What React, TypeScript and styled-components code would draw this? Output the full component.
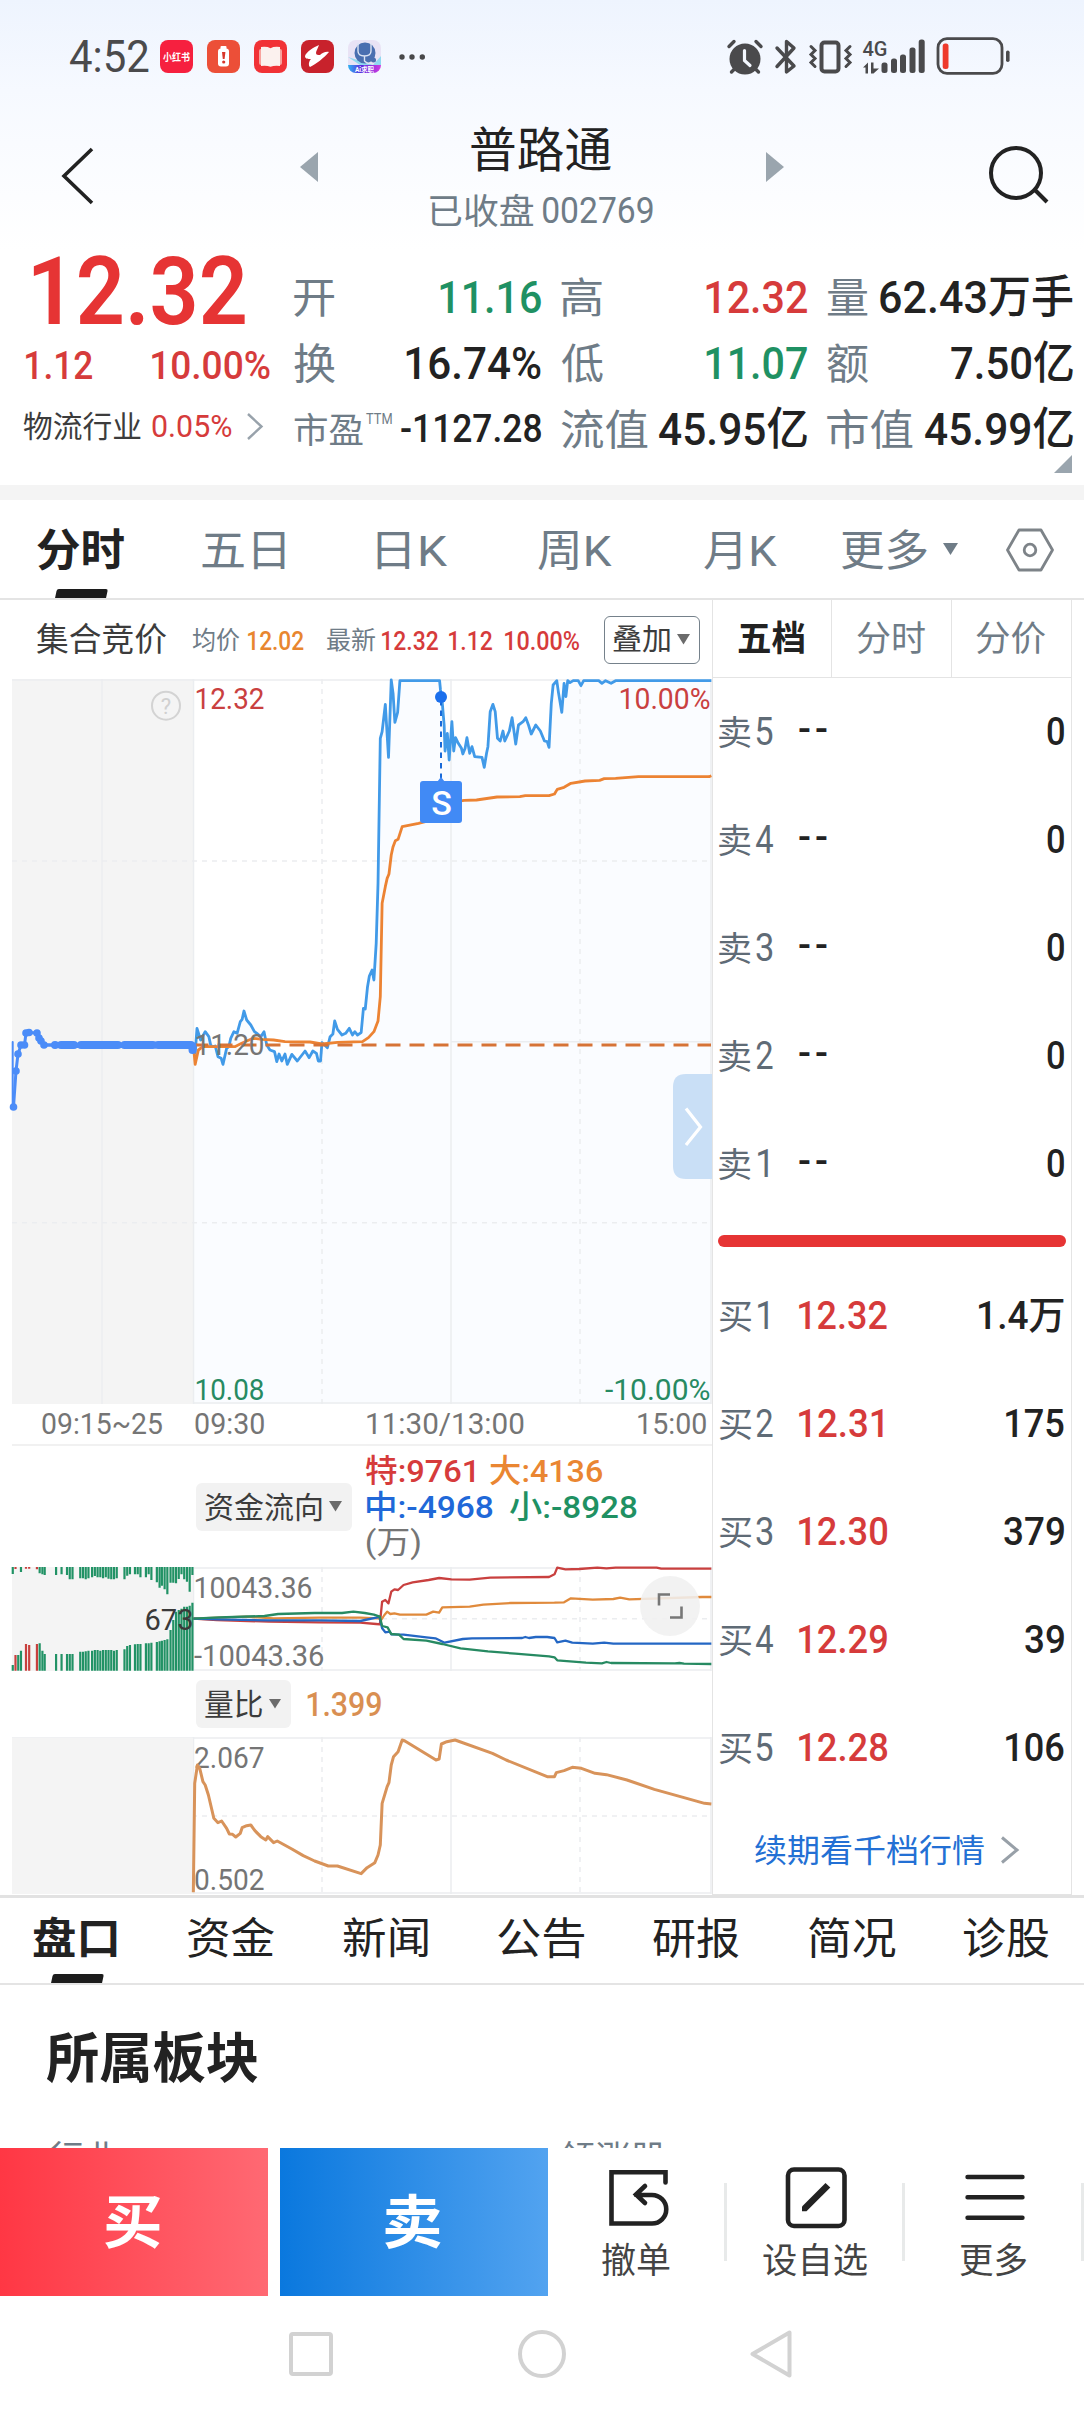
import React, { useLayoutEffect, useState } from "react";
import styled, { createGlobalStyle } from "styled-components";

const FONT = `Roboto, "Noto Sans CJK SC", "Noto Sans", sans-serif`;

const INK = "#222222";
const MUTED = "#6f7c87";
const RED = "#d63b3b";
const GREEN = "#1f9163";
const LINE = "#e4e4e4";

const Global = createGlobalStyle`
  * { box-sizing: border-box; }
  body { margin: 0; background: #fff; }
`;

/* ---------- text fitted to a fixed ink width ---------- */

const FitBox = styled.span<{ $w: number; $h: number; $ml: number }>`
  display: block;
  flex: none;
  width: ${(p) => p.$w}px;
  height: ${(p) => p.$h}px;
  margin-left: ${(p) => p.$ml}px;
`;

const FitInner = styled.span<{ $size: number; $weight: number; $color: string; $spacing: number }>`
  display: block;
  width: max-content;
  white-space: nowrap;
  transform-origin: 0 50%;
  font-family: ${FONT};
  font-size: ${(p) => p.$size}px;
  line-height: ${(p) => p.$size}px;
  font-weight: ${(p) => p.$weight};
  letter-spacing: ${(p) => p.$spacing}px;
  color: ${(p) => p.$color};
`;

type FitProps = {
  w: number;
  size: number;
  weight?: number;
  color?: string;
  ml?: number;
  spacing?: number;
  lift?: number;
  children: string;
};

function Fit({ w, size, weight = 400, color = INK, ml = 0, spacing = 0, lift = 0, children }: FitProps) {
  const [transform, setTransform] = useState("none");
  useLayoutEffect(() => {
    const ctx = document.createElement("canvas").getContext("2d")!;
    ctx.font = `${weight} ${size}px ${FONT}`;
    const m = ctx.measureText(children);
    const left = -m.actualBoundingBoxLeft;
    const ratio = w / (m.actualBoundingBoxRight - left + spacing * (children.length - 1));
    const drop = (/[0-9.]/.test(children) ? 0 : size * 0.04) - lift;
    const nudge = /^[\u4e00-\u9fff]/.test(children) ? 0.9 : 0;
    setTransform(`translate(${-left * ratio - nudge}px, ${drop}px) scaleX(${ratio})`);
  }, [w, size, weight, spacing, lift, children]);
  return (
    <FitBox $w={w} $h={size} $ml={ml}>
      <FitInner $size={size} $weight={weight} $color={color} $spacing={spacing} style={{ transform }}>
        {children}
      </FitInner>
    </FitBox>
  );
}

/* ---------- shell ---------- */

const Page = styled.main`
  width: 1084px;
  height: 2412px;
  display: flex;
  flex-direction: column;
  overflow: hidden;
  font-family: ${FONT};
  background: linear-gradient(#eef4fe 0, #f6f9ff 90px, #ffffff 250px);
`;

const Icon = styled.svg<{ $ml?: number; $mt?: number }>`
  display: block;
  flex: none;
  overflow: visible;
  margin-left: ${(p) => p.$ml ?? 0}px;
  margin-top: ${(p) => p.$mt ?? 0}px;
`;

const StatusBar = styled.div`
  height: 113px;
  padding-left: 70px;
  display: flex;
  align-items: center;
  flex: none;
`;

const Header = styled.header`
  height: 129px;
  flex: none;
  display: flex;
  align-items: flex-start;
  padding-left: 60px;
`;

const TitleBlock = styled.div`
  width: 224px;
  margin-left: 112px;
  padding-top: 12px;
  display: flex;
  flex-direction: column;
  align-items: center;
  gap: 20px;
`;

const Row = styled.div<{ $h?: number }>`
  display: flex;
  align-items: center;
  height: ${(p) => (p.$h ? p.$h + "px" : "auto")};
`;

/* ---------- quote ---------- */

const Quote = styled.section`
  height: 243px;
  flex: none;
  display: flex;
  position: relative;
`;

const QuoteMain = styled.div`
  width: 295px;
  flex: none;
  padding-left: 24px;
`;

const Metrics = styled.div`
  display: grid;
  grid-template-columns: 246px 245px 245px;
  grid-template-rows: 66px 66px 66px;
  column-gap: 21px;
  padding-top: 22px;
`;

const Metric = styled.div`
  display: flex;
  align-items: center;
  justify-content: space-between;
`;

const MetricLabel = styled.div`
  display: flex;
  align-items: flex-start;
`;

const Corner = styled.svg`
  position: absolute;
  right: 12px;
  top: 213px;
`;

const Band = styled.div`
  height: 15px;
  flex: none;
  background: #f4f4f4;
`;

/* ---------- tab bars ---------- */

const TabBar = styled.nav<{ $h: number; $top?: boolean }>`
  height: ${(p) => p.$h}px;
  flex: none;
  display: flex;
  align-items: center;
  background: #fff;
  border-top: ${(p) => (p.$top ? "3px solid #e2e2e2" : "none")};
  border-bottom: 2px solid ${LINE};
`;

const Tab = styled.div<{ $ml: number; $lift?: number; $active?: boolean }>`
  position: relative;
  height: 100%;
  margin-left: ${(p) => p.$ml}px;
  padding-bottom: ${(p) => p.$lift ?? 0}px;
  display: flex;
  align-items: center;
  flex: none;
  &::after {
    content: "";
    display: ${(p) => (p.$active ? "block" : "none")};
    position: absolute;
    left: 18px;
    bottom: 0;
    width: 51px;
    height: 9px;
    border-radius: 2px 2px 0 0;
    transform: skewX(-12deg);
    background: #1c1c1c;
  }
`;

/* ---------- body panel ---------- */

const Board = styled.section`
  height: 1295px;
  flex: none;
  margin-left: 12px;
  display: grid;
  grid-template-columns: 700px 360px;
`;

const ChartColumn = styled.div`
  display: flex;
  flex-direction: column;
`;

const ChartHead = styled.div<{ $h: number; $pl: number }>`
  display: flex;
  align-items: center;
  height: ${(p) => p.$h}px;
  flex: none;
  padding-left: ${(p) => p.$pl}px;
`;

const Dropdown = styled.div<{ $w: number; $ml?: number; $outlined?: boolean }>`
  display: flex;
  align-items: center;
  flex: none;
  width: ${(p) => p.$w}px;
  height: 48px;
  margin-left: ${(p) => p.$ml ?? 0}px;
  padding-left: ${(p) => (p.$outlined ? 9 : 10)}px;
  border-radius: 6px;
  border: ${(p) => (p.$outlined ? "1.5px solid #75818b" : "none")};
  background: ${(p) => (p.$outlined ? "#fff" : "#f2f2f2")};
`;

const Legend = styled.div`
  margin-left: 15px;
  display: flex;
  flex-direction: column;
`;

const Plot = styled.svg`
  display: block;
  flex: none;
  overflow: visible;
`;

const TimeAxis = styled.div`
  height: 42px;
  flex: none;
  display: flex;
  align-items: center;
  padding-bottom: 1px;
  border-bottom: 2px solid #f1f1f1;
`;

const OrderBook = styled.aside`
  border-left: 1px solid ${LINE};
  border-right: 1px solid ${LINE};
  border-bottom: 1px solid ${LINE};
  display: flex;
  flex-direction: column;
`;

const BookTabs = styled.div`
  height: 78px;
  flex: none;
  display: grid;
  grid-template-columns: 118px 120px 1fr;
  border-bottom: 1px solid ${LINE};
`;

const BookTab = styled.div`
  display: flex;
  align-items: center;
  justify-content: center;
  & + & {
    border-left: 1px solid ${LINE};
  }
`;

const Level = styled.div`
  height: 108px;
  flex: none;
  display: flex;
  align-items: center;
  padding-left: 7px;
`;

const LevelVolume = styled.div`
  margin-left: auto;
  margin-right: 7px;
`;

const LevelName = styled.div`
  width: 79px;
  display: flex;
  align-items: center;
`;

const Balance = styled.div`
  height: 12px;
  flex: none;
  margin: 17px 5px 15px 5px;
  border-radius: 6px;
  background: #e63434;
`;

const MoreLevels = styled.div`
  flex: 1;
  display: flex;
  align-items: center;
  padding: 3px 0 0 43px;
`;

/* ---------- sector + actions ---------- */

const Sector = styled.section`
  height: 163px;
  flex: none;
  background: #fff;
  overflow: hidden;
  padding: 46px 0 0 47px;
`;

const SectorCols = styled.div`
  display: flex;
  margin-top: 56px;
  padding-left: 3px;
`;

const Actions = styled.footer`
  height: 148px;
  flex: none;
  display: flex;
  background: #fff;
`;

const TradeButton = styled.div<{ $from: string; $to: string }>`
  width: 268px;
  margin-right: 12px;
  display: flex;
  align-items: center;
  justify-content: center;
  background: linear-gradient(90deg, ${(p) => p.$from}, ${(p) => p.$to});
  & + & {
    margin-right: 0;
  }
`;

const Action = styled.div`
  flex: 1;
  position: relative;
  display: flex;
  flex-direction: column;
  align-items: center;
  padding-top: 18px;
  gap: 15px;
  &::after {
    content: "";
    position: absolute;
    right: 0;
    top: 35px;
    width: 3px;
    height: 78px;
    background: #e8eaea;
  }
`;

const SystemNav = styled.div`
  height: 116px;
  flex: none;
  display: flex;
  align-items: center;
  padding-left: 289px;
`;

/* ---------- small drawings ---------- */

const Caret = ({ ml, w = 13, color = "#6b6b6b" }: { ml: number; w?: number; color?: string }) => (
  <Icon $ml={ml} width={w} height={w * 0.8} viewBox="0 0 13 10.4" preserveAspectRatio="none">
    <path d="M0 0H13L6.5 10.4Z" fill={color} />
  </Icon>
);

const AppIcons = () => (
  <>
    <Icon $ml={11} width={33} height={33} viewBox="0 0 33 33">
      <rect width="33" height="33" rx="8" fill="#f6203f" />
      <text x="3" y="20.5" fontSize="10.5" fontWeight="700" fill="#fff" fontFamily={FONT} textLength="27" lengthAdjust="spacingAndGlyphs">
        小红书
      </text>
    </Icon>
    <Icon $ml={14} width={33} height={33} viewBox="0 0 33 33">
      <rect width="33" height="33" rx="8" fill="#ec4f38" />
      <rect x="13.5" y="6" width="6" height="4" rx="1" fill="#fff" />
      <rect x="11" y="8.5" width="11" height="18" rx="3" fill="#fff" />
      <path d="M15 12h3.4l-.8 7h-1.8z" fill="#d8362a" />
      <circle cx="16.7" cy="22" r="1.6" fill="#d8362a" />
    </Icon>
    <Icon $ml={14} width={33} height={33} viewBox="0 0 33 33">
      <rect width="33" height="33" rx="8" fill="#f13236" />
      <rect x="5" y="9" width="23" height="16" rx="2" fill="#f8a29d" />
      <path d="M7 7q6-.8 9.500 1.200Q20 6.200 26 7v19q-6-.6-9.500.8Q13 25.400 7 26z" fill="#fbf1ee" />
    </Icon>
    <Icon $ml={14} width={33} height={33} viewBox="0 0 33 33">
      <rect width="33" height="33" rx="8" fill="#c8222c" />
      <path d="M18 5C13 7 5 12 4 16c0 3 3 3 6 3-2 2-3 6-1 8 6-3 14-9 19-15-3-1-7 1-9 3-2 0-4 0-4-2s2-5 3-8z" fill="#fff" />
    </Icon>
    <Icon $ml={14} width={33} height={33} viewBox="0 0 33 33">
      <defs>
        <linearGradient id="ai" x1="0" y1="0" x2="1" y2="0">
          <stop offset="0" stopColor="#2fb4f2" />
          <stop offset=".4" stopColor="#5a2be0" />
          <stop offset="1" stopColor="#d23be0" />
        </linearGradient>
        <clipPath id="aiClip">
          <rect width="33" height="33" rx="8" />
        </clipPath>
      </defs>
      <g clipPath="url(#aiClip)">
        <rect width="33" height="33" fill="#e9e3f5" />
        <path d="M0 17L12 25H33V16L25 25z" fill="#8fd8f0" />
        <circle cx="17" cy="13" r="10.500" fill="#4a6fb0" />
        <path d="M10 3v8q0 5 6.500 5t6.500-5V3M16.500 16v5q4 4 7 1" fill="none" stroke="#dce4f4" strokeWidth="1.400" />
        <circle cx="25.500" cy="20" r="2.500" fill="#4a6fb0" />
        <rect y="25" width="33" height="8" fill="url(#ai)" />
        <text x="7" y="31.500" fontSize="7" fontWeight="700" fill="#fff" fontFamily={FONT} textLength="19" lengthAdjust="spacingAndGlyphs">
          Ai求职
        </text>
      </g>
    </Icon>
    <Icon $ml={18} width={26} height={6} viewBox="0 0 26 6">
      <circle cx="3" cy="3" r="2.700" fill="#48484a" />
      <circle cx="13" cy="3" r="2.700" fill="#48484a" />
      <circle cx="23.300" cy="3" r="2.700" fill="#48484a" />
    </Icon>
  </>
);

const StatusIcons = () => (
  <Icon $ml={301} width={284} height={38} viewBox="726 37.500 284 38" fill="#4a4a4c" stroke="none">
    <circle cx="745" cy="58.500" r="15.500" />
    <g stroke="#4a4a4c" strokeWidth="3.400" strokeLinecap="round" fill="none">
      <path d="M729 46L734 41M761 46L756 41M735 68l-3.500 3.500M755 68l3.500 3.500" />
      <path d="M777 47.500L794 65.500 786.500 71.500V41L794 47.500 777 66" strokeLinejoin="round" />
      <path d="M811 46l4 4-4 4 4 4-4 4 4 4M850 46l-4 4 4 4-4 4 4 4-4 4" strokeWidth="3" />
      <rect x="821.500" y="42" width="17" height="29" rx="3" strokeWidth="4" />
    </g>
    <path d="M744.500 50V60L750 65" stroke="#f3f7fe" strokeWidth="3.200" strokeLinecap="round" fill="none" />
    <text x="862.500" y="55" fontSize="20.500" fontWeight="500" fontFamily={FONT} textLength="25" lengthAdjust="spacingAndGlyphs">
      4G
    </text>
    <path d="M863 67L868 62v11h-2.500v-6zM871 62h2.500v6H879l-5.500 5H871z" />
    <rect x="881.500" y="62" width="6" height="10.500" rx="2.500" />
    <rect x="891" y="58" width="6" height="14.500" rx="2.500" />
    <rect x="900" y="54" width="6" height="18.500" rx="2.500" />
    <rect x="909.500" y="47" width="6" height="25.500" rx="2.500" />
    <rect x="918.700" y="39" width="6" height="33.500" rx="2.500" />
    <rect x="938" y="38.200" width="64" height="34.600" rx="9" fill="none" stroke="#4a4a4c" strokeWidth="2.800" />
    <rect x="942.700" y="43" width="5.800" height="25.500" rx="2.500" fill="#ee3a2c" />
    <rect x="1006" y="50" width="3.600" height="11.500" rx="1.800" />
  </Icon>
);

/* ---------- charts ---------- */

/* Series are stored in sample units: 2.193 per pixel across, 3 per pixel down. */
const SX = 1 / 2.193;
const SY = 1 / 3;

const PRICE =
  "424,1125 428,1150 432,1075 440,1110 450,1085 458,1100 462,1125 466,1130 472,1128 478,1160 485,1165 489,1183 497,1135 502,1130 506,1105 513,1085 520,1090 527,1055 531,1048 535,1023 541,1050 550,1065 558,1085 565,1092 572,1100 579,1085 585,1125 592,1140 602,1145 607,1175 612,1152 618,1173 625,1152 630,1183 640,1153 652,1173 669,1143 678,1163 686,1143 694,1150 698,1173 703,1173 706,1118 712,1125 718,1133 724,1100 730,1092 734,1053 740,1078 750,1095 758,1090 766,1075 773,1095 778,1085 784,1095 792,1088 797,1015 801,1017 806,950 810,918 816,900 820,930 825,820 829,640 834,205 838,185 845,103 852,262 858,30 862,70 866,157 872,127 877,32 964,32 966,60 970,100 974,165 976,243 981,190 985,270 991,155 995,243 999,203 1005,220 1012,235 1015,252 1020,235 1024,203 1030,250 1035,230 1041,260 1057,262 1062,292 1067,250 1070,230 1075,125 1081,103 1086,125 1091,205 1097,213 1103,183 1107,213 1117,183 1123,143 1131,222 1137,165 1147,155 1153,143 1159,165 1165,192 1175,165 1185,183 1194,213 1200,215 1204,232 1209,100 1213,45 1221,32 1225,70 1232,127 1237,40 1241,80 1245,32 1250,38 1257,32 1268,32 1274,47 1280,32 1313,32 1320,40 1328,32 1340,40 1350,32 1560,32";
const AVERAGE =
  "424,1125 428,1183 435,1140 445,1130 515,1130 530,1120 555,1105 575,1108 600,1110 625,1115 680,1116 706,1122 740,1117 795,1115 808,1103 820,1085 829,1053 834,980 838,700 845,650 849,625 853,612 858,555 862,530 867,512 873,508 882,470 918,460 960,445 975,400 1018,391 1045,390 1090,381 1140,380 1152,377 1204,377 1216,372 1222,358 1237,352 1252,340 1283,333 1315,331 1325,326 1350,325 1400,320 1555,320 1560,317";

const FLOWS: [string, string][] = [
  ["#c9403f", "424,536 476,540 590,545 700,547 790,548 825,552 833,553 838,485 845,480 852,490 858,455 865,448 873,450 885,435 905,427 940,420 963,414 990,418 1030,419 1075,413 1204,411 1216,403 1222,383 1240,388 1270,387 1310,383 1330,385 1350,383 1440,383 1450,386 1560,386"],
  ["#e08a3c", "424,536 480,533 540,530 600,535 700,533 790,533 830,535 836,540 843,525 849,515 856,522 865,520 877,524 935,524 950,515 963,518 970,502 1030,500 1060,494 1120,489 1216,488 1237,487 1252,475 1300,479 1345,477 1360,473 1380,478 1540,471 1560,471"],
  ["#2467c4", "424,536 476,538 590,541 700,541 790,543 825,533 832,530 838,565 845,577 855,575 858,583 885,584 935,592 955,595 975,608 1015,597 1035,595 1145,594 1152,591 1160,594 1175,591 1200,591 1216,594 1222,607 1240,602 1255,608 1300,611 1325,608 1345,611 1560,611"],
  ["#278a62", "424,536 480,532 580,528 610,522 690,519 750,519 775,515 800,519 820,524 833,530 838,558 850,562 858,582 875,584 885,597 935,602 970,612 1010,625 1070,634 1130,641 1204,649 1216,652 1222,661 1285,668 1320,670 1330,666 1340,669 1480,670 1490,669 1500,671 1560,672"],
];

const RATIO =
  "424,1357 427,1030 433,975 438,985 445,1025 450,1035 457,1065 469,1135 478,1148 486,1143 497,1165 503,1182 510,1183 517,1191 527,1180 531,1163 541,1157 550,1155 559,1172 572,1190 583,1200 587,1190 600,1208 608,1203 640,1227 665,1247 690,1263 720,1278 740,1278 792,1301 805,1283 822,1268 829,1245 834,1215 838,1090 849,1040 853,1028 858,975 863,950 873,935 882,900 888,903 950,955 956,960 963,957 968,912 980,905 998,900 1080,940 1110,960 1200,1010 1216,1010 1220,998 1237,992 1255,982 1275,985 1305,1000 1330,1004 1375,1020 1435,1048 1500,1073 1545,1090 1560,1092";

/* x, end of the upper bar, start of the lower bar, 1 = rising */
const BARS: [number, number, number, number?][] = [
  [28, 402, 675], [34, 387, 645, 1], [40, 381, 645], [46, 396, 632], [57, 386, 612, 1], [64, 386, 615, 1], [81, 388, 612, 1],
  [87, 400, 610], [93, 403, 632], [98, 405, 642], [123, 405, 642], [135, 403, 642], [147, 405, 642], [153, 418, 642], [159, 418, 642],
  [176, 415, 635], [182, 415, 635], [188, 418, 634], [194, 415, 632], [202, 412, 632], [208, 408, 630], [214, 412, 630], [220, 412, 632],
  [226, 415, 630], [232, 412, 630], [238, 416, 630], [244, 418, 630], [250, 418, 632], [256, 415, 630], [273, 418, 628], [279, 407, 618],
  [285, 403, 615], [296, 403, 613], [302, 403, 612], [308, 412, 612], [320, 412, 610], [326, 403, 610], [332, 420, 608], [344, 427, 606],
  [350, 443, 604], [355, 437, 602], [361, 448, 600], [367, 463, 598], [374, 428, 570], [380, 428, 540], [386, 430, 515], [392, 417, 510],
  [398, 403, 506], [404, 418, 500], [410, 425, 500], [416, 455, 497], [422, 405, 488],
];

const AUCTION: [number, number][] = [
  [13.5, 1107], [16, 1071], [18, 1054], [21, 1045], [24.5, 1045], [26, 1033], [29, 1032.5], [37, 1033], [39, 1038], [41, 1041], [44, 1045],
];

type LabelProps = { x: number; y: number; w: number; color?: string; children: string };
const Label = ({ x, y, w, color = "#757575", children }: LabelProps) => (
  <text x={x - 1.5} y={y} fontSize="29.5" fontFamily={FONT} fill={color} textLength={w + 3} lengthAdjust="spacingAndGlyphs">
    {children}
  </text>
);

const Series = ({ top, points, color, width }: { top: number; points: string; color: string; width: number }) => (
  <g transform={`translate(0 ${top}) scale(${SX} ${SY})`}>
    <polyline points={points} fill="none" stroke={color} strokeWidth={width} strokeLinejoin="round" vectorEffect="non-scaling-stroke" />
  </g>
);

const Grid = ({ top, bottom, dashed }: { top: number; bottom: number; dashed: number[] }) => (
  <g stroke="#ebedf0" strokeWidth="1.500" fill="none">
    <path d={`M12 ${top + 1}H711M193.500 ${bottom - 1}H711M193.500 ${top}V${bottom}M451 ${top}V${bottom}M711 ${top}V${bottom}`} />
    <path d={`M322 ${top}V${bottom}M580 ${top}V${bottom}`} strokeDasharray="5 5" />
    {dashed.map((y) => (
      <path key={y} d={`M12 ${y}H711`} strokeDasharray="5 5" />
    ))}
  </g>
);

const PriceChart = () => (
  <Plot width={700} height={725} viewBox="12 679 700 725">
    <rect x="12" y="679" width="181.500" height="725" fill="#f4f4f4" />
    <g transform={`translate(0 670) scale(${SX} ${SY})`}>
      <polygon points={`${PRICE} 1560,2202 424,2202`} fill="#fafcff" />
    </g>
    <Grid top={679} bottom={1404} dashed={[861, 1222.7]} />
    <path d="M102 679V1404M451 1041.700H711" stroke="#ebedf0" strokeWidth="1.500" />
    <circle cx="166" cy="705.700" r="14" fill="none" stroke="#d3d3d3" strokeWidth="2" />
    <text x="166" y="713.500" fontSize="22" textAnchor="middle" fill="#d0d0d0" fontFamily={FONT}>?</text>
    <Series top={670} points={PRICE} color="#419ae8" width={2.8} />
    <Series top={670} points={AVERAGE} color="#ec8333" width={2.8} />
    <path d="M193.500 1045H711" stroke="#d67336" strokeWidth="3" strokeDasharray="15 9" />
    <g stroke="#4b8cf8" fill="#4b8cf8" strokeLinecap="round">
      <path d="M12.700 1042V1107" strokeWidth="2" />
      <polyline points={AUCTION.map((p) => p.join(",")).join(" ")} fill="none" strokeWidth="3" />
      {AUCTION.map(([x, y]) => (
        <circle key={x} cx={x} cy={y} r="3.800" stroke="none" />
      ))}
      <path d="M44 1045H192" strokeWidth="3.500" />
      <path d="M55 1045h.1M61 1045H74M81 1045H118M124.500 1045H153M158 1045H191M192.500 1046V1050" strokeWidth="8" />
    </g>
    <Label x={196} y={709} w={67} color="#c94040">12.32</Label>
    <Label x={620} y={709} w={89} color="#c94040">10.00%</Label>
    <Label x={196} y={1055} w={67}>11.20</Label>
    <Label x={196} y={1400} w={67} color="#278a62">10.08</Label>
    <Label x={606.5} y={1400} w={102.5} color="#278a62">-10.00%</Label>
    <path d="M441 700V778" stroke="#1a6ad8" strokeWidth="2" strokeDasharray="5.500 5" />
    <circle cx="441" cy="697" r="6" fill="#1b6fec" />
    <path d="M437 782L441 777L445 782Z" fill="#418af5" />
    <rect x="420" y="781" width="42" height="42" rx="3" fill="#418af5" />
    <text x="441.500" y="814.500" fontSize="34" fontWeight="500" textAnchor="middle" fill="#fff" fontFamily={FONT}>S</text>
    <path d="M712 1074H686Q673 1074 673 1087V1166Q673 1179 686 1179H712Z" fill="#c9dff6" />
    <path d="M686 1108.500L700.500 1127L686 1145" fill="none" stroke="#fff" strokeWidth="3.200" />
  </Plot>
);

const FlowChart = () => (
  <Plot width={700} height={104} viewBox="12 1567 700 104">
    <rect x="12" y="1567" width="181.500" height="104" fill="#f4f4f4" />
    <Grid top={1567} bottom={1671} dashed={[1618.7]} />
    <rect x="12" y="1567" width="181" height="104" fill="#f4f4f4" />
    <g transform={`translate(0 1440) scale(${SX} ${SY})`}>
      {BARS.map(([x, up, low, rising]) => (
        <path key={x} d={`M${x} 381V${up}M${x} ${low}V692`} stroke={rising ? "#c8403e" : "#219265"} strokeWidth="4.800" />
      ))}
    </g>
    <Label x={195} y={1598} w={116}>10043.36</Label>
    <Label x={195.5} y={1666} w={127.5}>-10043.36</Label>
    {FLOWS.map(([color, points]) => (
      <Series key={color} top={1440} points={points} color={color} width={2.3} />
    ))}
    <Label x={146} y={1630} w={46} color="#3a3a3a">673</Label>
    <circle cx="670" cy="1606" r="30" fill="#f0f0f0" fillOpacity=".88" />
    <path d="M659 1605.500V1594.500H670M670 1617.500H681.500V1606.500" fill="none" stroke="#777" strokeWidth="2.600" />
  </Plot>
);

const RatioChart = () => (
  <Plot width={700} height={157} viewBox="12 1737 700 157">
    <Grid top={1737} bottom={1894} dashed={[1816]} />
    <rect x="12" y="1738" width="181" height="156" fill="#f4f4f4" />
    <Label x={195.5} y={1768} w={67.5}>2.067</Label>
    <Label x={195.5} y={1890} w={67.5}>0.502</Label>
    <Series top={1440} points={RATIO} color="#d8935a" width={3} />
  </Plot>
);

/* ---------- data ---------- */

type Value = { text: string; w: number; color?: string; size?: number };
const METRICS: { label: string; lw: number; lsize?: number; sup?: boolean; value: Value }[] = [
  { label: "开", lw: 40, value: { text: "11.16", w: 101, color: GREEN } },
  { label: "高", lw: 41, value: { text: "12.32", w: 101, color: RED } },
  { label: "量", lw: 41, value: { text: "62.43万手", w: 193 } },
  { label: "换", lw: 41, value: { text: "16.74%", w: 135 } },
  { label: "低", lw: 42, value: { text: "11.07", w: 101, color: GREEN } },
  { label: "额", lw: 41, value: { text: "7.50亿", w: 122 } },
  { label: "市盈", lw: 69, lsize: 35, sup: true, value: { text: "-1127.28", w: 140, size: 38 } },
  { label: "流值", lw: 87, value: { text: "45.95亿", w: 148 } },
  { label: "市值", lw: 86, value: { text: "45.99亿", w: 148 } },
];

const SELLS = ["5", "4", "3", "2", "1"];
const BUYS: [string, string, number, string, number][] = [
  ["1", "12.32", 88, "1.4万", 85],
  ["2", "12.31", 84, "175", 58],
  ["3", "12.30", 88, "379", 60],
  ["4", "12.29", 88, "39", 39],
  ["5", "12.28", 88, "106", 58],
];

const LevelTag = ({ side, n }: { side: string; n: string }) => (
  <LevelName>
    <Fit w={32} size={34} color="#5f6b76">{side}</Fit>
    <Fit w={n === "1" ? 10 : 17} ml={n === "1" ? 6 : 4} size={38.5} color="#5f6b76">{n}</Fit>
  </LevelName>
);

export default function App() {
  return (
    <Page>
      <Global />
      <StatusBar>
        <Fit w={78.5} size={43.5} color="#4a4a4c" lift={-1}>4:52</Fit>
        <AppIcons />
        <StatusIcons />
      </StatusBar>

      <Header>
        <Icon $mt={33} width={36} height={60} viewBox="0 0 36 60">
          <path d="M32 3L4 30L32 57" fill="none" stroke="#222" strokeWidth="3.600" />
        </Icon>
        <Icon $ml={204} $mt={39} width={18} height={30} viewBox="0 0 18 30">
          <path d="M18 0V30L0 15Z" fill="#9aa5ae" />
        </Icon>
        <TitleBlock>
          <Fit w={140} size={48}>普路通</Fit>
          <Row>
            <Fit w={103} size={35.5} color={MUTED}>已收盘</Fit>
            <Fit w={110} ml={9} size={37} color={MUTED} lift={1}>002769</Fit>
          </Row>
        </TitleBlock>
        <Icon $ml={112} $mt={39} width={18} height={30} viewBox="0 0 18 30">
          <path d="M0 0V30L18 15Z" fill="#9aa5ae" />
        </Icon>
        <Icon $ml={205} $mt={33} width={60} height={60} viewBox="988 146 60 60">
          <circle cx="1015" cy="173" r="25" fill="none" stroke="#222" strokeWidth="4" />
          <path d="M1034 190L1046 202" stroke="#222" strokeWidth="4" />
        </Icon>
      </Header>

      <Quote>
        <QuoteMain>
          <Row $h={98}>
            <Fit w={212} ml={8.5} size={95} weight={600} color="#e63434">12.32</Fit>
          </Row>
          <Row $h={50}>
            <Fit w={66} ml={2} size={39.5} weight={500} color={RED} lift={-1}>1.12</Fit>
            <Fit w={118} ml={60} size={39.5} weight={500} color={RED} lift={-1}>10.00%</Fit>
          </Row>
          <Row $h={72}>
            <Fit w={118} size={30} color="#3c3c3c">物流行业</Fit>
            <Fit w={80} ml={10} size={32} color={RED}>0.05%</Fit>
            <Icon $ml={14} width={18} height={27} viewBox="0 0 18 27">
              <path d="M2 1L15.500 13.500L2 26" fill="none" stroke="#98a2ab" strokeWidth="2.400" />
            </Icon>
          </Row>
        </QuoteMain>
        <Metrics>
          {METRICS.map((m) => (
            <Metric key={m.label}>
              <MetricLabel>
                <Fit w={m.lw} size={m.lsize ?? 42} color={MUTED} lift={-0.7}>{m.label}</Fit>
                {m.sup && <Fit w={26} ml={2} size={14.5} color={MUTED}>TTM</Fit>}
              </MetricLabel>
              <Fit w={m.value.w} size={m.value.size ?? 45} weight={500} color={m.value.color}>{m.value.text}</Fit>
            </Metric>
          ))}
        </Metrics>
        <Corner width={18} height={18} viewBox="0 0 18 18">
          <path d="M18 0V18H0Z" fill="#9aa5ae" />
        </Corner>
      </Quote>
      <Band />

      <TabBar $h={100}>
        <Tab $ml={38} $active><Fit w={87} size={44} weight={700}>分时</Fit></Tab>
        <Tab $ml={77.5}><Fit w={82.5} size={43} color={MUTED}>五日</Fit></Tab>
        <Tab $ml={93}><Fit w={70} size={43} color={MUTED}>日K</Fit></Tab>
        <Tab $ml={90.5}><Fit w={73.5} size={43} color={MUTED}>周K</Fit></Tab>
        <Tab $ml={92.5}><Fit w={72.5} size={43} color={MUTED}>月K</Fit></Tab>
        <Tab $ml={66}>
          <Fit w={85} size={43} color={MUTED}>更多</Fit>
          <Caret ml={15} w={15} color={MUTED} />
        </Tab>
        <Icon $ml={48} $mt={2} width={48} height={44} viewBox="0 0 48 44">
          <path d="M13 2H35L46.500 22L35 42H13L1.500 22Z" fill="none" stroke="#7d8388" strokeWidth="2.800" strokeLinejoin="round" />
          <circle cx="24" cy="22" r="5.800" fill="none" stroke="#7d8388" strokeWidth="2.800" />
        </Icon>
      </TabBar>

      <Board>
        <ChartColumn>
          <ChartHead $h={79} $pl={25}>
            <Fit w={130} size={33} color="#3c3c3c" lift={1}>集合竞价</Fit>
            <Fit w={48} ml={26} size={25} color={MUTED}>均价</Fit>
            <Fit w={55.5} ml={6.5} size={26} weight={500} color="#e8862f" lift={-0.5}>12.02</Fit>
            <Fit w={48} ml={25} size={25} color={MUTED}>最新</Fit>
            <Fit w={56} ml={6} size={26} weight={500} color={RED} lift={-0.5}>12.32</Fit>
            <Fit w={43} ml={11} size={26} weight={500} color={RED} lift={-0.5}>1.12</Fit>
            <Fit w={74} ml={13} size={26} weight={500} color={RED} lift={-0.5}>10.00%</Fit>
            <Dropdown $w={96} $ml={25} $outlined>
              <Fit w={57} size={29} color="#3c3c3c">叠加</Fit>
              <Caret ml={6} />
            </Dropdown>
          </ChartHead>
          <PriceChart />
          <TimeAxis>
            <Fit w={120} ml={30} size={30} color="#757575">09:15~25</Fit>
            <Fit w={69.5} ml={33} size={30} color="#757575">09:30</Fit>
            <Fit w={157} ml={102.5} size={30} color="#757575">11:30/13:00</Fit>
            <Fit w={68.5} ml={113.5} size={30} color="#757575">15:00</Fit>
          </TimeAxis>
          <ChartHead $h={121} $pl={184}>
            <Dropdown $w={155.5}>
              <Fit w={117} size={30} color="#3c3c3c">资金流向</Fit>
              <Caret ml={6} />
            </Dropdown>
            <Legend>
              <Row $h={36}>
                <Fit w={108} size={32} weight={500} color={RED}>特:9761</Fit>
                <Fit w={112} ml={16} size={32} weight={500} color="#ea8632">大:4136</Fit>
              </Row>
              <Row $h={36}>
                <Fit w={126.5} size={32} weight={500} color="#2068d8">中:-4968</Fit>
                <Fit w={127.5} ml={16.5} size={32} weight={500} color={GREEN}>小:-8928</Fit>
              </Row>
              <Row $h={36}>
                <Fit w={53} size={31} color="#757575" lift={1}>(万)</Fit>
              </Row>
            </Legend>
          </ChartHead>
          <FlowChart />
          <ChartHead $h={66} $pl={184}>
            <Dropdown $w={95}>
              <Fit w={57.5} size={30} color="#3c3c3c">量比</Fit>
              <Caret ml={5.5} w={12} />
            </Dropdown>
            <Fit w={74} ml={16} size={33} weight={500} color="#d98f52">1.399</Fit>
          </ChartHead>
          <RatioChart />
        </ChartColumn>

        <OrderBook>
          <BookTabs>
            <BookTab><Fit w={67} size={35} weight={700}>五档</Fit></BookTab>
            <BookTab><Fit w={68} size={35} color={MUTED}>分时</Fit></BookTab>
            <BookTab><Fit w={69} size={35} color={MUTED}>分价</Fit></BookTab>
          </BookTabs>
          {SELLS.map((n) => (
            <Level key={n}>
              <LevelTag side="卖" n={n} />
              <Fit w={28} size={38} weight={500} spacing={4} lift={4.5}>--</Fit>
              <LevelVolume><Fit w={17} size={38.5} weight={500}>0</Fit></LevelVolume>
            </Level>
          ))}
          <Balance />
          {BUYS.map(([n, price, pw, vol, vw]) => (
            <Level key={n}>
              <LevelTag side="买" n={n} />
              <Fit w={pw} size={38.5} weight={500} color={RED}>{price}</Fit>
              <LevelVolume><Fit w={vw} size={38.5} weight={500}>{vol}</Fit></LevelVolume>
            </Level>
          ))}
          <MoreLevels>
            <Fit w={229} size={32} color="#2370d4">续期看千档行情</Fit>
            <Icon $ml={15} width={20} height={28} viewBox="0 0 20 28">
              <path d="M2 1.500L17 14L2 26.500" fill="none" stroke="#98a0a8" strokeWidth="3" />
            </Icon>
          </MoreLevels>
        </OrderBook>
      </Board>

      <TabBar $h={90} $top>
        <Tab $ml={34} $lift={6} $active><Fit w={83.5} size={43} weight={700}>盘口</Fit></Tab>
        <Tab $ml={71.5} $lift={6}><Fit w={86} size={43}>资金</Fit></Tab>
        <Tab $ml={68.5} $lift={6}><Fit w={85} size={43}>新闻</Fit></Tab>
        <Tab $ml={70.5} $lift={6}><Fit w={86.5} size={43}>公告</Fit></Tab>
        <Tab $ml={68.5} $lift={6}><Fit w={86} size={43}>研报</Fit></Tab>
        <Tab $ml={69.5} $lift={6}><Fit w={86.5} size={43}>简况</Fit></Tab>
        <Tab $ml={68} $lift={6}><Fit w={86} size={43}>诊股</Fit></Tab>
      </TabBar>

      <Sector>
        <Fit w={212} size={54} weight={700}>所属板块</Fit>
        <SectorCols>
          <Fit w={68} size={35} color={MUTED}>行业</Fit>
          <Fit w={106} ml={443} size={35} color={MUTED}>领涨股</Fit>
        </SectorCols>
      </Sector>

      <Actions>
        <TradeButton $from="#ff3744" $to="#ff6973">
          <Fit w={55.5} size={58} weight={700} color="#fff" lift={1}>买</Fit>
        </TradeButton>
        <TradeButton $from="#0a78de" $to="#52a3f0">
          <Fit w={55.5} size={58} weight={700} color="#fff" lift={1}>卖</Fit>
        </TradeButton>
        <Action>
          <Icon width={62} height={62} viewBox="606 2166 62 62" fill="none" stroke="#222" strokeWidth="4.600" strokeLinecap="round">
            <path d="M665.500 2182.500V2172.300H611.500V2223.500H652A14.200 14.200 0 0 0 652 2195H636M645 2186L636 2194.500L645 2203" />
          </Icon>
          <Fit w={68} size={35} color="#444">撤单</Fit>
        </Action>
        <Action>
          <Icon width={62} height={62} viewBox="785 2166 62 62" fill="none" stroke="#222">
            <rect x="788" y="2169.500" width="56.500" height="56.500" rx="6" strokeWidth="4.600" />
            <path d="M802 2211.300V2206.500L825.500 2183L830.300 2187.500L806.500 2211.300Z" fill="#222" stroke="none" />
          </Icon>
          <Fit w={104} size={35} color="#444">设自选</Fit>
        </Action>
        <Action>
          <Icon width={62} height={62} viewBox="964 2166 62 62" stroke="#222" strokeWidth="4.400" strokeLinecap="round">
            <path d="M967.500 2177H1022.500M967.500 2197.300H1022.500M967.500 2217.700H1022.500" />
          </Icon>
          <Fit w={67} size={35} color="#444">更多</Fit>
        </Action>
      </Actions>

      <SystemNav>
        <Icon width={44} height={44} viewBox="0 0 44 44" fill="none" stroke="#d2d2d2" strokeWidth="4">
          <rect x="2" y="2" width="40" height="40" rx="2" />
        </Icon>
        <Icon $ml={185} width={48} height={48} viewBox="0 0 48 48" fill="none" stroke="#d2d2d2" strokeWidth="4">
          <circle cx="24" cy="24" r="22" />
        </Icon>
        <Icon $ml={184} width={42} height={48} viewBox="0 0 42 48" fill="none" stroke="#d2d2d2" strokeWidth="4" strokeLinejoin="round">
          <path d="M39.500 2.500V45.500L2.500 24Z" />
        </Icon>
      </SystemNav>
    </Page>
  );
}
